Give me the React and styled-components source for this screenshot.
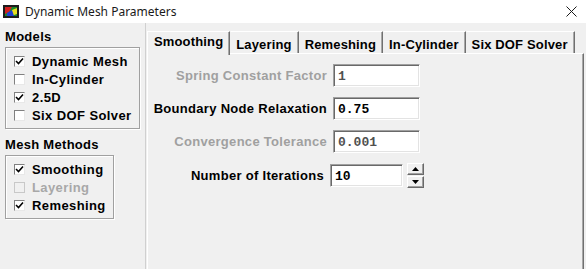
import React from "react";
import styled, { createGlobalStyle } from "styled-components";

const GlobalStyle = createGlobalStyle`
    html, body {
        margin: 0;
        padding: 0;
        background: #f0f0f0;
        overflow: hidden;
    }
`;

const models = [
    { label: "Dynamic Mesh", checked: true },
    { label: "In-Cylinder", checked: false },
    { label: "2.5D", checked: true },
    { label: "Six DOF Solver", checked: false },
];

const methods = [
    { label: "Smoothing", checked: true },
    { label: "Layering", checked: false, disabled: true },
    { label: "Remeshing", checked: true },
];

const tabs = ["Smoothing", "Layering", "Remeshing", "In-Cylinder", "Six DOF Solver"];

const fields = [
    { label: "Spring Constant Factor", value: "1", disabled: true },
    { label: "Boundary Node Relaxation", value: "0.75" },
    { label: "Convergence Tolerance", value: "0.001", disabled: true },
];

export default function App() {
    return (
        <>
            <GlobalStyle />
            <Window>
                <TitleBar>
                    <AppIcon />
                    <Title>Dynamic Mesh Parameters</Title>
                    <Close>
                        <svg width="11" height="11" viewBox="0 0 11 11">
                            <path d="M0.5 0.5 L10.5 10.5 M10.5 0.5 L0.5 10.5" stroke="#1a1a1a" strokeWidth="1" />
                        </svg>
                    </Close>
                </TitleBar>
                <Body>
                    <Sidebar>
                        <GroupTitle>Models</GroupTitle>
                        <GroupBox $width={135}>
                            {models.map((m) => (
                                <CheckRow key={m.label} {...m} />
                            ))}
                        </GroupBox>
                        <GroupTitle $top={8}>Mesh Methods</GroupTitle>
                        <GroupBox $width={109}>
                            {methods.map((m) => (
                                <CheckRow key={m.label} {...m} />
                            ))}
                        </GroupBox>
                    </Sidebar>
                    <Main>
                        <TabStrip>
                            {tabs.map((t, i) => (
                                <Tab key={t} $active={i === 0}>
                                    {t}
                                </Tab>
                            ))}
                        </TabStrip>
                        <Panel>
                            {fields.map((f) => (
                                <FieldRow key={f.label}>
                                    <FieldLabel $disabled={f.disabled} $width={179}>
                                        {f.label}
                                    </FieldLabel>
                                    <Input $disabled={f.disabled} $width={87}>
                                        {f.value}
                                    </Input>
                                </FieldRow>
                            ))}
                            <FieldRow>
                                <FieldLabel $width={176}>Number of Iterations</FieldLabel>
                                <Input $width={73}>10</Input>
                                <Spinner>
                                    <SpinButton>
                                        <svg width="7" height="4" viewBox="0 0 7 4">
                                            <path d="M3.5 0 L7 4 L0 4 Z" fill="#000" />
                                        </svg>
                                    </SpinButton>
                                    <SpinButton>
                                        <svg width="7" height="4" viewBox="0 0 7 4">
                                            <path d="M0 0 L7 0 L3.5 4 Z" fill="#000" />
                                        </svg>
                                    </SpinButton>
                                </Spinner>
                            </FieldRow>
                        </Panel>
                    </Main>
                </Body>
            </Window>
        </>
    );
}

function CheckRow({ label, checked, disabled }) {
    return (
        <Row>
            <Box $disabled={disabled}>
                {checked && (
                    <svg width="9" height="9" viewBox="0 0 9 9">
                        <path d="M1 4 L3.5 6.5 L8 1.5" stroke="#000" strokeWidth="1.6" fill="none" />
                    </svg>
                )}
            </Box>
            <RowLabel $disabled={disabled}>{label}</RowLabel>
        </Row>
    );
}

function AppIcon() {
    return (
        <svg width="16" height="13" viewBox="0 0 16 13">
            <rect x="0" y="0" width="16" height="13" fill="#1c1c1c" />
            <rect x="2" y="2" width="12" height="9" fill="#1a8a2a" />
            <path d="M2 2 L9 2 L6 7 L2 9 Z" fill="#d32020" />
            <path d="M9 5 L14 3 L14 9 L8 11 Z" fill="#e8e020" />
            <path d="M4 8 L9 5 L11 11 L4 11 Z" fill="#2040d0" />
        </svg>
    );
}

const Window = styled.div`
    width: 586px;
    height: 269px;
    display: flex;
    flex-direction: column;
    background: #f0f0f0;
    font-family: "Liberation Sans", Arial, sans-serif;
`;

const TitleBar = styled.div`
    height: 23px;
    background: #fff;
    display: flex;
    align-items: center;
    padding-left: 3px;
    gap: 6px;
`;

const Title = styled.div`
    font-family: "Noto Sans", "Noto Sans CJK SC", sans-serif;
    font-size: 12px;
    color: #1a1a1a;
    flex: 1;
`;

const Close = styled.div`
    width: 11px;
    height: 11px;
    margin-right: 9px;
    display: flex;
`;

const Body = styled.div`
    flex: 1;
    display: flex;
    min-height: 0;
`;

const Sidebar = styled.div`
    width: 146px;
    padding: 6px 0 0 5px;
    box-sizing: border-box;
    border-right: 1px solid #d0d0d0;
`;

const GroupTitle = styled.div`
    font-size: 13px;
    font-weight: bold;
    line-height: 16px;
    margin-top: ${(p) => p.$top || 0}px;
    margin-bottom: 2px;
    color: #000;
    letter-spacing: 0.3px;
`;

const GroupBox = styled.div`
    width: ${(p) => p.$width}px;
    box-sizing: border-box;
    border: 1px solid #a0a0a0;
    box-shadow: inset 1px 1px #fff, 1px 1px #fff;
    padding: 4px 0 4px 8px;
`;

const Row = styled.div`
    height: 18px;
    display: flex;
    align-items: center;
    gap: 7px;
`;

const Box = styled.div`
    width: 11px;
    height: 11px;
    box-sizing: border-box;
    background: ${(p) => (p.$disabled ? "#f0f0f0" : "#fff")};
    border: 1px solid;
    border-color: ${(p) => (p.$disabled ? "#c8c8c8" : "#808080 #e8e8e8 #e8e8e8 #808080")};
    display: flex;
    align-items: center;
    justify-content: center;
`;

const RowLabel = styled.span`
    font-size: 13px;
    font-weight: bold;
    letter-spacing: 0.4px;
    color: ${(p) => (p.$disabled ? "#a8a8a8" : "#000")};
`;

const Main = styled.div`
    flex: 1;
    display: flex;
    flex-direction: column;
    padding: 8px 2px 0 1px;
`;

const TabStrip = styled.div`
    display: flex;
    height: 22px;
    align-items: stretch;
`;

const Tab = styled.div`
    padding: ${(p) => (p.$active ? "2px 6px 0 6px" : "5px 6px 0 5px")};
    font-size: 13px;
    font-weight: bold;
    letter-spacing: 0.15px;
    color: #000;
    border-top: 1px solid #fff;
    border-left: 1px solid ${(p) => (p.$active ? "#fff" : "#f0f0f0")};
    border-right: 1px solid #707070;
    box-shadow: inset -1px 0 #a8a8a8;
    background: #f0f0f0;
    position: relative;
    z-index: ${(p) => (p.$active ? 1 : 0)};
    margin-bottom: ${(p) => (p.$active ? "-2px" : "0")};
    white-space: nowrap;
`;

const Panel = styled.div`
    flex: 1;
    border-top: 1px solid #fff;
    border-left: 1px solid #fff;
    border-right: 1px solid #707070;
    box-shadow: inset -1px 0 #a8a8a8;
    padding-top: 10px;
    display: flex;
    flex-direction: column;
    gap: 10px;
`;

const FieldRow = styled.div`
    display: flex;
    align-items: center;
    gap: 6px;
`;

const FieldLabel = styled.div`
    width: ${(p) => p.$width}px;
    text-align: right;
    font-size: 13px;
    font-weight: bold;
    letter-spacing: 0.3px;
    color: ${(p) => (p.$disabled ? "#a0a0a0" : "#000")};
    white-space: nowrap;
`;

const Input = styled.div`
    width: ${(p) => p.$width}px;
    height: 23px;
    box-sizing: border-box;
    background: #fff;
    border-top: 1px solid #a0a0a0;
    border-left: 1px solid #a0a0a0;
    border-right: 1px solid #fff;
    border-bottom: 1px solid #fff;
    box-shadow: inset 1px 1px #696969, inset -1px -1px #e3e3e3;
    padding: 4px 0 0 4px;
    font-family: "Liberation Mono", "DejaVu Sans Mono", monospace;
    font-weight: bold;
    font-size: 13px;
    color: ${(p) => (p.$disabled ? "#505050" : "#000")};
`;

const Spinner = styled.div`
    display: flex;
    flex-direction: column;
    gap: 1px;
    margin-left: -2px;
`;

const SpinButton = styled.div`
    width: 17px;
    height: 12px;
    box-sizing: border-box;
    background: #f0f0f0;
    border: 1px solid;
    border-color: #fff #696969 #696969 #fff;
    box-shadow: inset -1px -1px #a0a0a0;
    display: flex;
    align-items: center;
    justify-content: center;
`;
